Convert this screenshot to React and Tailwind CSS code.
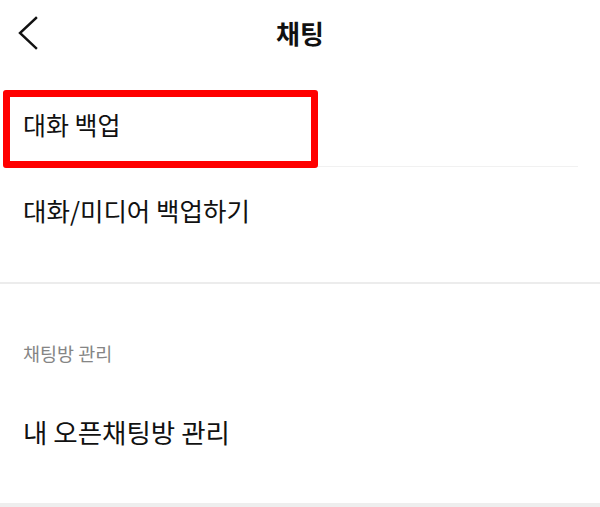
export default function App() {
  const font = { fontFamily: '"Noto Sans CJK KR", "Noto Sans", sans-serif' };
  return (
    <div className="w-[600px] h-[507px] bg-white overflow-hidden text-[#111]" style={font}>
      {/* header */}
      <div className="grid grid-cols-[60px_1fr_60px] items-center h-[66px]">
        <div className="pl-[17px] flex items-center">
          <svg width="22" height="34" viewBox="0 0 22 34" fill="none">
            <path d="M19 2 L3 17 L19 32" stroke="#111" strokeWidth="2.4" strokeLinecap="square" />
          </svg>
        </div>
        <h1 className="text-center text-[26px] font-bold leading-[32px]">채팅</h1>
        <div />
      </div>

      {/* backup section */}
      <div className="relative">
        <div className="h-[100px] pt-[42px] px-[23px] text-[25px] leading-[32px]">대화 백업</div>
        <div className="mx-[22px] h-px bg-[#f1f1f1]" />
        <div className="absolute left-[3px] top-[24px] w-[315px] h-[78px] border-[7px] border-[#ff0000] rounded-[3px] z-10" />
      </div>
      <div className="h-[115px] pt-[27px] px-[23px] text-[25.5px] leading-[32px]">대화/미디어 백업하기</div>
      <div className="h-[2px] bg-[#ececec]" />

      {/* chat room management */}
      <div className="pt-[56px] px-[23px] text-[18.5px] leading-[26px] text-[#858585]">채팅방 관리</div>
      <div className="pt-[50px] pb-[55px] px-[23px] text-[26.5px] leading-[32px]">내 오픈채팅방 관리</div>
      <div className="h-[4px] bg-[#eeeeee]" />
    </div>
  );
}
